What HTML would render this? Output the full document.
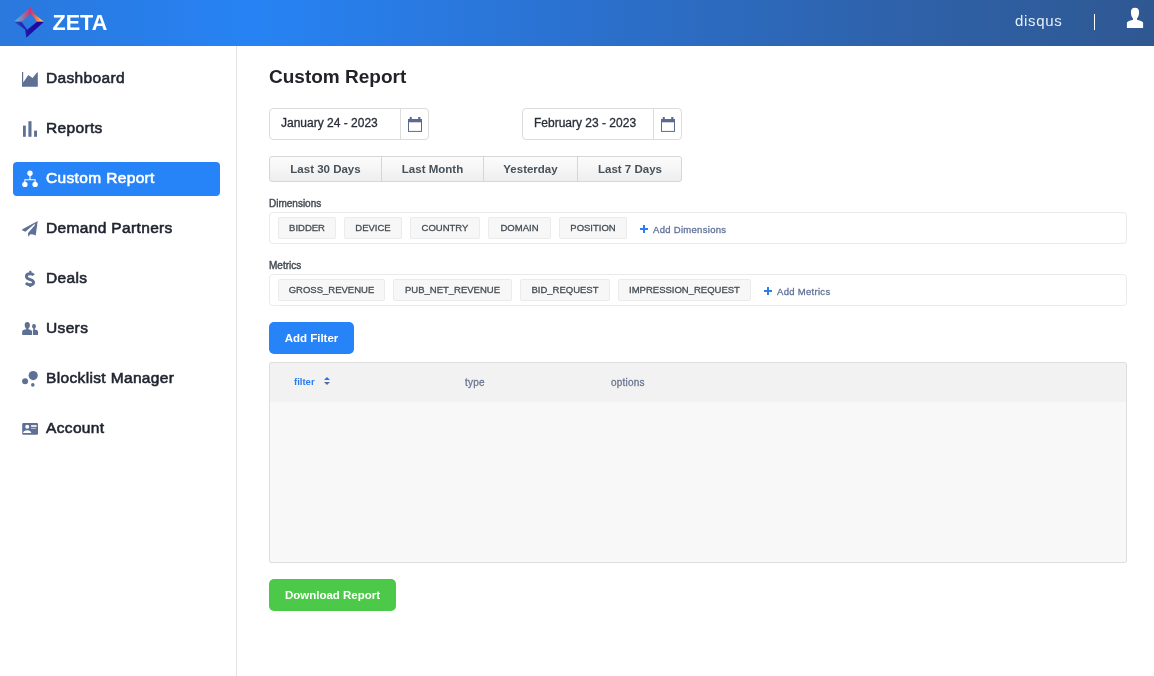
<!DOCTYPE html>
<html><head><meta charset="utf-8">
<style>
*{box-sizing:border-box;margin:0;padding:0}
html,body{width:1154px;height:676px;overflow:hidden;background:#fff;will-change:transform;font-family:"Liberation Sans",sans-serif}
svg{position:absolute;overflow:visible}
.a{position:absolute;white-space:nowrap}
.hdr{position:absolute;left:0;top:0;width:1154px;height:46px;background:linear-gradient(90deg,#2a78dc 0%,#2783f4 22%,#2b71cf 50%,#2e63ad 75%,#2f5892 100%)}
.zeta{left:52.5px;top:10px;color:#fff;font-weight:bold;font-size:21.6px;letter-spacing:0}
.user{left:1015px;top:12px;color:#e8eef8;font-size:15px;letter-spacing:0.7px}
.sep{position:absolute;left:1094px;top:14px;width:1px;height:16px;background:#fff}
.side{position:absolute;left:0;top:46px;width:237px;height:630px;border-right:1px solid #e3e3e3}
.nav{position:absolute;left:13px;width:207px;height:34px;border-radius:4px;color:#1f2330;font-size:15.5px;letter-spacing:0.35px;-webkit-text-stroke:0.6px currentColor}
.nav .t{position:absolute;left:33px;top:7px}
.nav.act{background:#2783f8;color:#fff}
.ic{fill:#5f7095}
.title{left:269px;top:66px;font-size:19px;font-weight:bold;color:#222328}
.date{position:absolute;top:108px;width:160px;height:32px;border:1px solid #dcdcdc;border-radius:4px;background:#fff}
.date .t{position:absolute;left:11px;top:7px;font-size:12px;color:#2a2e38;-webkit-text-stroke:0.3px #2a2e38}
.date .cal{position:absolute;left:130px;top:0;width:29px;height:30px;border-left:1px solid #dcdcdc}
.bg{position:absolute;left:269px;top:156px;width:413px;height:26px;border:1px solid #d6d6d6;border-radius:3px;background:linear-gradient(#fcfcfc,#eeeeee)}
.bg div{position:absolute;top:0;height:24px;font-size:11.5px;font-weight:bold;color:#46515a;text-align:center;line-height:24px;border-right:1px solid #d6d6d6}
.lbl{left:269px;font-size:10px;color:#454b53;-webkit-text-stroke:0.4px #454b53}
.box{position:absolute;left:269px;width:858px;height:32px;border:1px solid #eaeaea;border-radius:4px}
.tag{position:absolute;top:4px;height:22px;border:1px solid #ebebeb;border-radius:2px;background:#f7f7f7;font-size:9.5px;color:#454d55;line-height:19px;text-align:center;-webkit-text-stroke:0.3px #454d55}
.add{position:absolute;top:11px;font-size:9.5px;letter-spacing:0.3px;color:#62739a;-webkit-text-stroke:0.3px #62739a}
.plus{position:absolute;top:12px;width:8px;height:8px}
.plus:before{content:"";position:absolute;left:0;top:3px;width:8px;height:2px;background:#2a7ff0}
.plus:after{content:"";position:absolute;left:3px;top:0;width:2px;height:8px;background:#2a7ff0}
.btn{position:absolute;border-radius:5px;color:#fff;font-weight:bold;font-size:11.5px;text-align:center}
.tbl{position:absolute;left:269px;top:362px;width:858px;height:201px;border:1px solid #dedede;background:#f8f8f8;border-radius:2px}
.th{position:absolute;left:0;top:0;width:856px;height:39px;background:#f2f2f2}
.th span{position:absolute;top:14px;font-size:10px;letter-spacing:0.2px;color:#6c7691;-webkit-text-stroke:0.3px #6c7691}
</style></head><body>
<div class="hdr">
  <svg style="left:10px;top:2px" width="40" height="40" viewBox="0 0 40 40">
    <defs>
      <linearGradient id="lg1" x1="4" y1="0" x2="34" y2="0" gradientUnits="userSpaceOnUse">
        <stop offset="0" stop-color="#38c8f5"/><stop offset="0.55" stop-color="#d2326e"/><stop offset="0.8" stop-color="#f08a50"/><stop offset="1" stop-color="#fff23a"/>
      </linearGradient>
      <linearGradient id="lg2" x1="4" y1="0" x2="34" y2="0" gradientUnits="userSpaceOnUse">
        <stop offset="0" stop-color="#3048c0"/><stop offset="0.5" stop-color="#2010a8"/><stop offset="1" stop-color="#1e009c"/>
      </linearGradient>
    </defs>
    <path d="M4.1,19.8 L21.6,4.1 L23,10.9 L34,19.8 L27,19.8 L21,11.8 L11.5,19.8 Z" fill="url(#lg1)"/>
    <path d="M4.1,19.8 L11.5,19.8 L17.2,27.8 L27,19.8 L34,19.8 L16.3,35.8 L15.1,27.6 Z" fill="url(#lg2)"/>
  </svg>
  <div class="a zeta">ZETA</div>
  <div class="a user">disqus</div>
  <div class="sep"></div>
  <svg style="left:1120px;top:4px" width="30" height="30" viewBox="0 0 30 30"><path d="M15,3.8 C18,3.8 19.2,5.5 19.1,8.5 C19,11.5 18,13.5 17,14.5 L17,15.8 C19,16.6 22,17 23.1,18.5 L23.1,24 L6.9,24 L6.9,18.5 C8,17 11,16.6 13,15.8 L13,14.5 C12,13.5 10.9,11.5 10.9,8.5 C10.9,5.5 12,3.8 15,3.8 Z" fill="#fff"/></svg>
</div>
<div class="side"></div>

<!-- nav items: origin of each svg is (16, itemTop+?); use abs coords via page svg -->
<div class="nav" style="top:62px"><span class="t">Dashboard</span></div>
<div class="nav" style="top:112px"><span class="t">Reports</span></div>
<div class="nav act" style="top:162px"><span class="t">Custom Report</span></div>
<div class="nav" style="top:212px"><span class="t">Demand Partners</span></div>
<div class="nav" style="top:262px"><span class="t">Deals</span></div>
<div class="nav" style="top:312px"><span class="t">Users</span></div>
<div class="nav" style="top:362px"><span class="t">Blocklist Manager</span></div>
<div class="nav" style="top:412px"><span class="t">Account</span></div>

<svg style="left:0;top:0" width="237" height="460" viewBox="0 0 237 460">
  <!-- Dashboard -->
  <g class="ic">
    <path d="M22,72 L23.2,72 L23.2,82.6 L28.3,75 L32.6,78.1 L37,72.6 Q37.4,72.2 37.8,72.3 L37.8,86.8 L22,86.8 Z"/>
  </g>
  <!-- Reports -->
  <g class="ic">
    <rect x="23" y="125.6" width="2.8" height="11.2"/>
    <rect x="28.4" y="121.2" width="3.1" height="15.6"/>
    <rect x="34.1" y="130.6" width="2.9" height="6.2"/>
  </g>
  <!-- Custom report (white) -->
  <g fill="#fff" stroke="#fff">
    <circle cx="30" cy="173.3" r="2.7" stroke="none"/>
    <circle cx="24.9" cy="184.4" r="2.7" stroke="none"/>
    <circle cx="35.1" cy="184.4" r="2.7" stroke="none"/>
    <path d="M30,175 V179.8 M24.9,183 V179.8 H35.1 V183" fill="none" stroke-width="1.1"/>
  </g>
  <!-- Demand partners -->
  <g class="ic" transform="translate(16,214)">
    <path d="M21.6,7.1 L6.4,15.2 C6,15.6 6.1,16.2 6.6,16.5 L9.4,17.7 L19,9.4 Z"/>
    <path d="M21.7,7.3 L19.7,21.4 L17.2,20.4 L14.4,20.3 L12.1,22.7 L12.1,19 L19.6,10.3 Z"/>
    <path d="M21.7,7.1 L18.2,9.9 L19.8,11.2 Z"/>
  </g>
  <!-- Deals $ -->
  <g transform="translate(16,264)">
    <rect class="ic" x="13.2" y="6.8" width="2.2" height="3"/>
    <rect class="ic" x="13.2" y="20.2" width="2.2" height="2.8"/>
    <path d="M17.7,11.1 C16.9,10.2 15.7,9.7 14.2,9.7 C12.2,9.7 10.4,10.5 10.4,12.4 C10.4,14.4 12.4,15 14.4,15.6 C16.4,16.2 17.6,16.9 17.6,18.6 C17.6,20.3 16,20.8 14.2,20.8 C12.5,20.8 11,20.3 9.9,19.1" fill="none" stroke="#5f7095" stroke-width="2.9"/>
  </g>
  <!-- Users -->
  <g class="ic" transform="translate(16,314)">
    <path d="M11.3,8.1 C12.9,8.1 13.9,9.2 13.9,11 C13.9,12.6 13.2,14 12.4,14.6 L12.4,15.2 C14,15.6 15.6,16.1 16,17 L16,20.9 L6.2,20.9 L6.2,17 C6.6,16.1 8.2,15.6 10.2,15.2 L10.2,14.6 C9.4,14 8.7,12.6 8.7,11 C8.7,9.2 9.7,8.1 11.3,8.1 Z"/>
    <path d="M18,10.1 C19.2,10.1 19.9,11 19.9,12.2 C19.9,13.4 19.4,14.2 18.8,14.8 L18.8,15.6 C20.2,15.9 21.6,16.4 22,17.2 L22,20.9 L16.9,20.9 L16.9,16.6 C16.6,16.2 16.8,15.8 17.4,15.5 L17.4,14.8 C16.6,14.2 16.1,13.4 16.1,12.2 C16.1,11 16.8,10.1 18,10.1 Z"/>
  </g>
  <!-- Blocklist -->
  <g class="ic" transform="translate(16,364)">
    <circle cx="17.2" cy="11.6" r="4.6"/>
    <circle cx="9.1" cy="17.2" r="3"/>
    <circle cx="16.8" cy="20.9" r="1.8"/>
  </g>
  <!-- Account -->
  <g transform="translate(16,414)">
    <rect class="ic" x="6.2" y="8.9" width="15.8" height="11.8" rx="1.2"/>
    <circle cx="11.2" cy="12.8" r="2" fill="#fff"/>
    <path d="M7,18.9 C7.4,17.2 9,16.3 11.2,16.3 C13.4,16.3 15,17.2 15.3,18.9 Z" fill="#fff"/>
    <rect x="15.1" y="11.2" width="5.6" height="1.6" fill="#fff"/>
    <rect x="15.1" y="13.9" width="4.8" height="0.8" fill="#fff" opacity="0.7"/>
  </g>
</svg>

<div class="a title">Custom Report</div>
<div class="date" style="left:269px"><span class="t">January 24 - 2023</span><div class="cal">
  <svg style="left:0;top:0" width="29" height="30"><g fill="#5a6a90"><rect x="8.7" y="8" width="2.1" height="2.5"/><rect x="17.2" y="8" width="2.2" height="2.5"/><rect x="7" y="10" width="14" height="3.3"/></g><rect x="7.5" y="10.5" width="13" height="11.9" fill="none" stroke="#5a6a90" stroke-width="1"/></svg>
</div></div>
<div class="date" style="left:522px"><span class="t">February 23 - 2023</span><div class="cal">
  <svg style="left:0;top:0" width="29" height="30"><g fill="#5a6a90"><rect x="8.7" y="8" width="2.1" height="2.5"/><rect x="17.2" y="8" width="2.2" height="2.5"/><rect x="7" y="10" width="14" height="3.3"/></g><rect x="7.5" y="10.5" width="13" height="11.9" fill="none" stroke="#5a6a90" stroke-width="1"/></svg>
</div></div>

<div class="bg">
  <div style="left:0;width:112px">Last 30 Days</div>
  <div style="left:112px;width:102px">Last Month</div>
  <div style="left:214px;width:94px">Yesterday</div>
  <div style="left:308px;width:104px;border-right:none">Last 7 Days</div>
</div>

<div class="a lbl" style="top:198px">Dimensions</div>
<div class="box" style="top:212px">
  <div class="tag" style="left:8px;width:58px">BIDDER</div>
  <div class="tag" style="left:74px;width:58px">DEVICE</div>
  <div class="tag" style="left:140px;width:70px">COUNTRY</div>
  <div class="tag" style="left:218px;width:63px">DOMAIN</div>
  <div class="tag" style="left:289px;width:68px">POSITION</div>
  <div class="plus" style="left:370px"></div>
  <div class="add" style="left:383px">Add Dimensions</div>
</div>
<div class="a lbl" style="top:260px">Metrics</div>
<div class="box" style="top:274px">
  <div class="tag" style="left:8px;width:107px">GROSS_REVENUE</div>
  <div class="tag" style="left:123px;width:119px">PUB_NET_REVENUE</div>
  <div class="tag" style="left:250px;width:90px">BID_REQUEST</div>
  <div class="tag" style="left:348px;width:133px">IMPRESSION_REQUEST</div>
  <div class="plus" style="left:494px"></div>
  <div class="add" style="left:507px">Add Metrics</div>
</div>

<div class="btn" style="left:269px;top:322px;width:85px;height:32px;line-height:32px;background:#2783f8">Add Filter</div>

<div class="tbl">
  <div class="th">
    <span style="left:24px;top:12.5px;font-size:9.5px;color:#2a7af0;font-weight:bold;letter-spacing:0;-webkit-text-stroke:0">filter</span>
    <svg style="left:54px;top:14px" width="7" height="8"><path d="M0,2.9 L3,0 L6,2.9 Z" fill="#1f74f5"/><path d="M0,5 L3,7.9 L6,5 Z" fill="#5a6a90"/></svg>
    <span style="left:195px">type</span>
    <span style="left:341px">options</span>
  </div>
</div>

<div class="btn" style="left:269px;top:579px;width:127px;height:32px;line-height:32px;background:#4cc948">Download Report</div>
</body></html>
